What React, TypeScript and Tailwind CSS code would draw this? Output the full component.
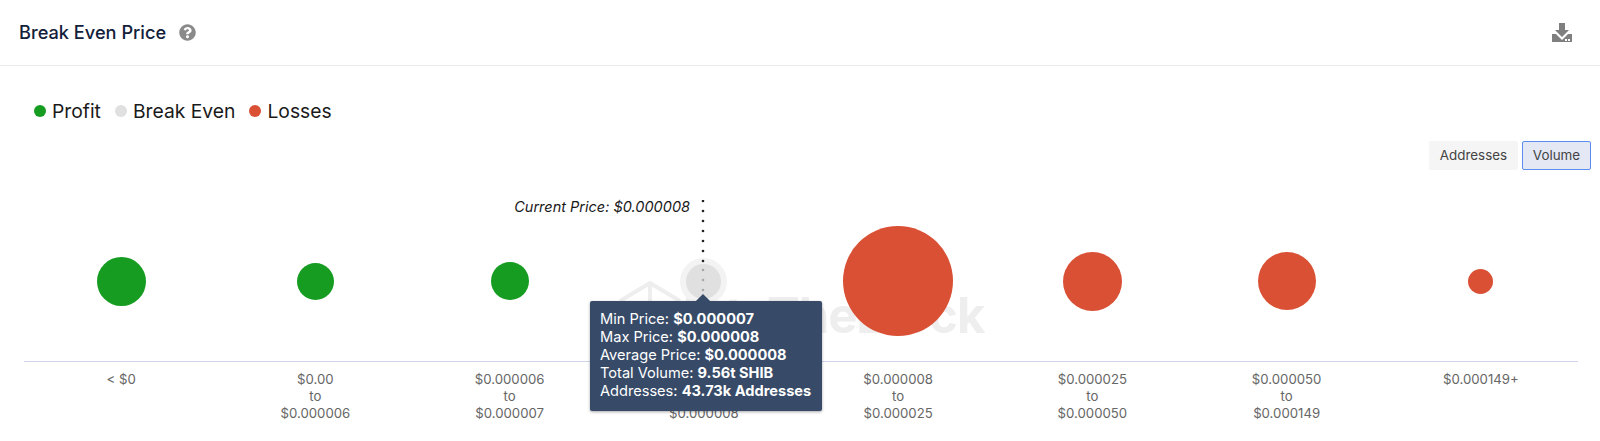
import { FaQuestionCircle } from "react-icons/fa";

const buckets = [
  { size: "h-[49px] w-[49px]", color: "bg-[#159c21]", label: ["< $0"] },
  { size: "h-[37px] w-[37px]", color: "bg-[#159c21]", label: ["$0.00", "to", "$0.000006"] },
  { size: "h-[38px] w-[38px]", color: "bg-[#159c21]", label: ["$0.000006", "to", "$0.000007"] },
  { size: "h-[35px] w-[35px] ring-[6px] ring-[#f3f3f3]", color: "bg-[#e0e0e0]", label: ["$0.000007", "to", "$0.000008"] },
  { size: "h-[110px] w-[110px]", color: "bg-[#d95035]", label: ["$0.000008", "to", "$0.000025"] },
  { size: "h-[59px] w-[59px]", color: "bg-[#d95035]", label: ["$0.000025", "to", "$0.000050"] },
  { size: "h-[58px] w-[58px]", color: "bg-[#d95035]", label: ["$0.000050", "to", "$0.000149"] },
  { size: "h-[25px] w-[25px]", color: "bg-[#d95035]", label: ["$0.000149+"] },
];

const tooltipRows = [
  ["Min Price:", "$0.000007"],
  ["Max Price:", "$0.000008"],
  ["Average Price:", "$0.000008"],
  ["Total Volume:", "9.56t SHIB"],
  ["Addresses:", "43.73k Addresses"],
];

function LegendItem({ color, label }: { color: string; label: string }) {
  return (
    <div className="flex items-center gap-[6px]">
      <span className={`h-[12px] w-[12px] rounded-full ${color}`} />
      <span>{label}</span>
    </div>
  );
}

function DownloadIcon() {
  return (
    <svg width="22" height="22" viewBox="0 0 22 22" fill="#7f7f7f">
      <path d="M8 1h6v7h4l-7 7-7-7h4z" />
      <path d="M1 12h4l6 6 6-6h4v8H1z" />
      <rect x="14" y="17" width="2" height="2" fill="#fff" />
      <rect x="17" y="17" width="2" height="2" fill="#fff" />
    </svg>
  );
}

function Watermark() {
  return (
    <div className="absolute left-[593px] top-[88px] flex items-center text-[#eeeeee]">
      <svg className="-mt-[8px]" width="66" height="60" viewBox="0 0 66 60" fill="none" stroke="currentColor" strokeWidth="4">
        <path d="M3 20 33 2l30 18M33 2v36" />
      </svg>
      <span className="text-[49px] font-bold leading-none tracking-[-1px]">IntoTheBlock</span>
    </div>
  );
}

// dots of the current price marker, the lower ones sit behind the grey bubble
function PriceMarker() {
  return (
    <svg className="absolute left-[677px] top-[-1px]" width="4" height="92" viewBox="0 0 4 92">
      {[1, 11, 21, 31, 41, 51, 61, 70, 80, 90].map((y) => (
        <circle key={y} cx="2" cy={y} r="1.3" fill={y > 65 ? "#a8a8a8" : "#222"} />
      ))}
    </svg>
  );
}

export default function App() {
  return (
    <div className="h-[441px] w-[1600px] overflow-hidden bg-white font-['Inter',sans-serif]">
      <header className="flex h-[66px] items-center justify-between border-b border-[#e9e9ec] pl-[19px] pr-[27px]">
        <div className="flex items-center gap-[13px]">
          <h1 className="text-[18.2px] font-medium text-[#12203a]">Break Even Price</h1>
          <FaQuestionCircle className="mt-[1px] text-[#8a8a8a]" size={17} />
        </div>
        <DownloadIcon />
      </header>

      <div className="flex gap-[14px] pl-[34px] pt-[31px] text-[19.3px] leading-[28px] text-[#1a1a1a]">
        <LegendItem color="bg-[#159c21]" label="Profit" />
        <LegendItem color="bg-[#e0e0e0]" label="Break Even" />
        <LegendItem color="bg-[#d95035]" label="Losses" />
      </div>

      <div className="mt-[16px] flex justify-end gap-[4px] pr-[9px] text-[13.4px] text-[#444]">
        <button className="h-[29px] w-[89px] rounded-[2px] bg-[#f5f5f5]">Addresses</button>
        <button className="h-[29px] w-[69px] rounded-[2px] border-[1.5px] border-[#5b8def] bg-[#e3e8f4]">Volume</button>
      </div>

      <div className="relative ml-[24px] mr-[22px] mt-[31px]">
        <Watermark />
        <div className="relative grid h-[161px] grid-cols-8 border-b border-[#cdd6e8]">
          {buckets.map((b, i) => (
            <div key={i} className="flex items-center justify-center">
              <span className={`rounded-full ${b.size} ${b.color}`} />
            </div>
          ))}
        </div>
        <div className="grid grid-cols-8 pt-[9px] text-center text-[13.2px] leading-[17px] text-[#666]">
          {buckets.map((b, i) => (
            <div key={i}>
              {b.label.map((line, j) => (
                <div key={j}>{line}</div>
              ))}
            </div>
          ))}
        </div>

        <span className="absolute right-[888px] top-[-3px] text-[14.5px] italic leading-[17px] text-[#1a1a1a]">
          Current Price: $0.000008
        </span>
        <PriceMarker />

        <div className="absolute left-[566px] top-[100px] h-[110px] w-[232px] rounded-[2px] bg-[#374b68] py-[9px] pl-[10px] text-[14.6px] leading-[18px] text-white shadow-[0_1px_3px_rgba(0,0,0,0.35)]">
          <span className="absolute left-[108px] top-[-5px] h-[10px] w-[10px] rotate-45 bg-[#374b68]" />
          {tooltipRows.map(([name, value]) => (
            <div key={name} className="relative whitespace-nowrap">
              {name} <b className="font-bold">{value}</b>
            </div>
          ))}
        </div>
      </div>
    </div>
  );
}
